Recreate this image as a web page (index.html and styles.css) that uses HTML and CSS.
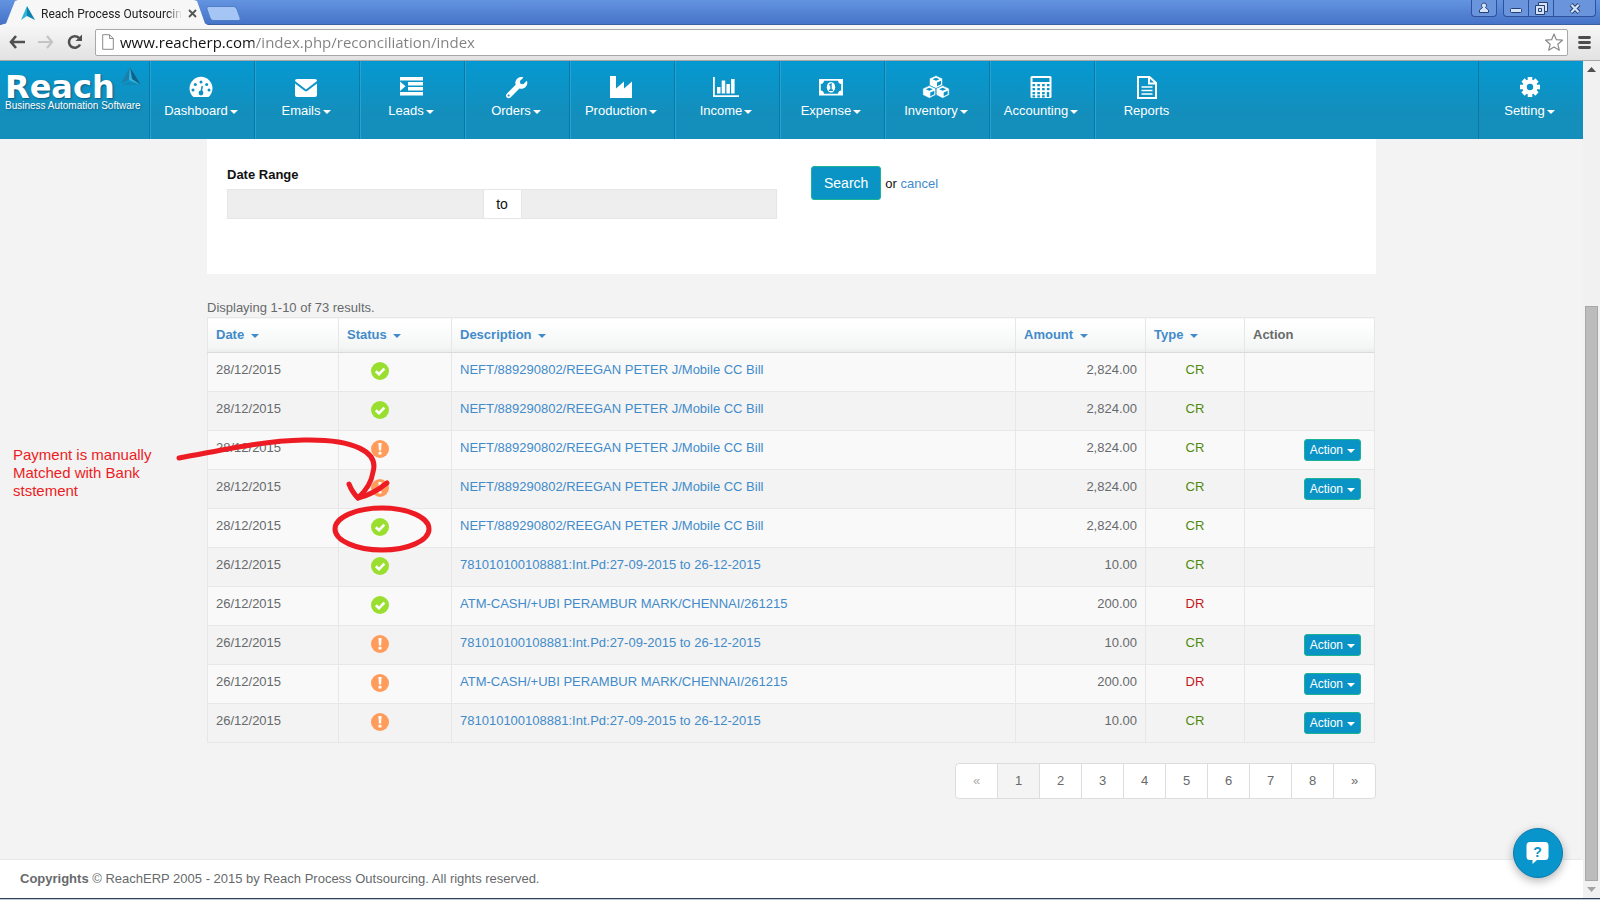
FILE: index.html
```
<!DOCTYPE html>
<html lang="en">
<head>
    <meta charset="UTF-8">
    <meta name="viewport" content="width=device-width, initial-scale=1.0">
    <title>Reach Process Outsourcing</title>
    <link rel="stylesheet" href="styles.css">
</head>
<body>
    <!-- shared icons -->
    <svg class="sprite" aria-hidden="true">
        <symbol id="ok" viewBox="0 0 18 18">
            <circle cx="9" cy="9" r="9" fill="#9adf2f"/>
            <path d="M4.8 9.2 8 12.2 13.4 6.6" fill="none" stroke="#fff" stroke-width="2.6"/>
        </symbol>
        <symbol id="warn" viewBox="0 0 18 18">
            <circle cx="9" cy="9" r="9" fill="#ff9c5b"/>
            <path d="M7.4 3h3.2l-.5 7.4H7.9z" fill="#fff"/>
            <rect x="7.5" y="11.8" width="3" height="2.8" rx=".6" fill="#fff"/>
        </symbol>
        <symbol id="arrowhead" viewBox="0 0 14 15">
            <path d="M6 0 0 14 6 10z" fill="#2cb4d8"/>
            <path d="M6 0 14 14 6 10z" fill="#0a83ad"/>
        </symbol>
    </svg>

    <header class="browser">
        <div class="tab-strip">
            <div class="tab">
                <svg class="tab-icon" width="14" height="15"><use href="#arrowhead"/></svg>
                <span class="tab-title">Reach Process Outsourcing</span>
                <button class="tab-close" aria-label="Close tab"><svg width="9" height="9" viewBox="0 0 9 9"><path d="M1 1l7 7M8 1 1 8" stroke="#555" stroke-width="1.8"/></svg></button>
            </div>
            <button class="new-tab" aria-label="New tab"></button>
            <div class="window-user">
                <button class="win-btn" aria-label="User"><svg width="12" height="12" viewBox="0 0 12 12"><path d="M3.5 3.5a2.5 2.5 0 1 1 4 2l3 2.500v2.500h-9V8l3-2.500a2.500 2.500 0 0 1-1-2z" fill="#d5e3fa" stroke="#26406f"/></svg></button>
            </div>
            <div class="window-controls">
                <button class="win-btn" aria-label="Minimize"><svg width="12" height="12" viewBox="0 0 12 12"><rect x=".5" y="6.500" width="11" height="4" rx="1" fill="#d5e3fa" stroke="#26406f"/></svg></button>
                <button class="win-btn" aria-label="Restore"><svg width="13" height="13" viewBox="0 0 13 13"><path d="M3.500.500h9v9h-3v3h-9v-9h3z" fill="#d5e3fa" stroke="#26406f"/><path d="M3.500 3.500h6v6M3.500 6.500h3v3h-3z" fill="none" stroke="#26406f"/></svg></button>
                <button class="win-btn win-close" aria-label="Close"><svg width="12" height="11" viewBox="0 0 12 11"><path d="M2 1.500 10 9.500M10 1.500 2 9.500" stroke="#26406f" stroke-width="4"/><path d="M2.300 1.800 9.700 9.200M9.700 1.800 2.300 9.200" stroke="#d5e3fa" stroke-width="2.200"/></svg></button>
            </div>
        </div>
        <div class="toolbar">
            <button class="tool-btn" aria-label="Back"><svg width="16" height="14" viewBox="0 0 16 14"><path d="M7 1 2 7l5 6M2 7h14" fill="none" stroke="#505050" stroke-width="2.600"/></svg></button>
            <button class="tool-btn" aria-label="Forward"><svg width="16" height="14" viewBox="0 0 16 14"><path d="M9 1l5 6-5 6M14 7H0" fill="none" stroke="#c4c4c4" stroke-width="2.200"/></svg></button>
            <button class="tool-btn" aria-label="Reload"><svg width="16" height="16" viewBox="0 0 16 16"><path d="M13 10.500A5.800 5.800 0 1 1 12 4" fill="none" stroke="#505050" stroke-width="2.600"/><path d="M15 .5v6.500H8.500z" fill="#505050"/></svg></button>
            <div class="address">
                <svg width="12" height="16" viewBox="0 0 12 16"><path d="M.7.700h6.800l3.800 3.800v10.800H.7zM7.500.700v3.800h3.800" fill="#fff" stroke="#8a8a8a"/></svg>
                <input class="address-input" type="text" aria-label="Address" value="www.reacherp.com/index.php/reconciliation/index">
                <svg width="18" height="18" viewBox="0 0 18 18"><path d="M9 1l2.400 5.700 6 .5-4.600 4 1.500 6L9 14l-5.300 3.200 1.500-6-4.600-4 6-.5z" fill="#fff" stroke="#8a8a8a" stroke-width="1.200" stroke-linejoin="round"/></svg>
            </div>
            <button class="tool-btn" aria-label="Menu"><svg width="13" height="13" viewBox="0 0 13 13"><path d="M1.500 1.500h10M1.500 6.500h10M1.500 11.500h10" stroke="#4d4d4d" stroke-width="2.800" stroke-linecap="round"/></svg></button>
        </div>
    </header>

    <div class="viewport">
        <div class="page">
            <nav class="navbar">
                <a class="brand" href="#">
                    <svg class="brand-mark" width="24" height="22" viewBox="0 0 24 22"><path d="M11 0 2 16l8-3z" fill="#1d7fa9"/><path d="M11 0 10 13l12 5z" fill="#35b5e0"/><path d="M11 0 22 18 13 12z" fill="#0f6288"/><path d="M10 15l-8 3h20z" fill="#1587b5"/></svg>
                    <span class="brand-name">Reach</span>
                    <span class="brand-tag">Business Automation Software</span>
                </a>
                <a class="nav-item" href="#">
                    <svg width="28" height="24" viewBox="0 0 28 24"><path d="M6.400 22A11.500 11.500 0 1 1 21.600 22z" fill="#fff"/><g fill="#0b93c5"><circle cx="6" cy="15" r="1.500"/><circle cx="8.300" cy="9.500" r="1.500"/><circle cx="14" cy="7" r="1.500"/><circle cx="19.700" cy="9.500" r="1.500"/><circle cx="22" cy="15" r="1.500"/><circle cx="14" cy="18" r="2.400"/></g><path d="M14 18l1.300-7" stroke="#0b93c5" stroke-width="1.500"/></svg>
                    <span class="caret">Dashboard</span>
                </a>
                <a class="nav-item" href="#">
                    <svg width="28" height="24" viewBox="0 0 28 24"><path d="M3 6q0-2 2-2h18q2 0 2 2L14 14.500zM3 8.500l9.500 7.300q1.500 1 3 0L25 8.500V20q0 2-2 2H5q-2 0-2-2z" fill="#fff"/></svg>
                    <span class="caret">Emails</span>
                </a>
                <a class="nav-item" href="#">
                    <svg width="28" height="24" viewBox="0 0 28 24"><path d="M3 2h23v3.500H3zM11 7h15v3.500H11zM11 12h15v3.500H11zM3 17h23v3.500H3zM3 6.500l5.500 4.700L3 16z" fill="#fff"/></svg>
                    <span class="caret">Leads</span>
                </a>
                <a class="nav-item" href="#">
                    <svg width="28" height="24" viewBox="-96 -45 672 576"><path fill="#fff" d="M507.730 109.100c-2.240-9.030-13.540-12.090-20.120-5.510l-74.360 74.360-67.880-11.310-11.310-67.880 74.360-74.360c6.620-6.620 3.430-17.900-5.660-20.160-47.380-11.740-99.550.910-136.580 37.930-39.640 39.640-50.550 97.100-34.050 147.200L18.740 402.760c-24.990 24.990-24.990 65.510 0 90.500 24.990 24.990 65.510 24.990 90.500 0l213.210-213.210c50.120 16.710 107.470 5.680 147.370-34.220 37.070-37.070 49.700-89.320 37.910-136.730zM64 472c-13.250 0-24-10.750-24-24 0-13.260 10.750-24 24-24s24 10.740 24 24c0 13.250-10.750 24-24 24z"/></svg>
                    <span class="caret">Orders</span>
                </a>
                <a class="nav-item" href="#">
                    <svg width="28" height="24" viewBox="0 0 28 24"><path d="M3 1h6v12.500l8-7v7l8-7V23H3z" fill="#fff"/></svg>
                    <span class="caret">Production</span>
                </a>
                <a class="nav-item" href="#">
                    <svg width="28" height="24" viewBox="0 0 28 24"><path d="M1 2h1.800v18.200H27V22H1zM5 12h3.500v6.500H5zM9.700 5.500h3.500v13H9.700zM14.400 9h3.500v9.500h-3.500zM19.100 4h3.500v14.500h-3.500z" fill="#fff"/></svg>
                    <span class="caret">Income</span>
                </a>
                <a class="nav-item" href="#">
                    <svg width="28" height="24" viewBox="0 0 28 24"><path fill-rule="evenodd" d="M2 4h24v16.500H2zM7 5.800A3.500 3.500 0 0 1 3.800 9v6.500A3.500 3.500 0 0 1 7 18.700h14a3.500 3.500 0 0 1 3.200-3.200V9A3.500 3.500 0 0 1 21 5.800z" fill="#fff"/><ellipse cx="14" cy="12.200" rx="4.200" ry="5.300" fill="#fff"/><path d="M12.300 10.200 14 9v6M12 15.300h4" fill="none" stroke="#0b93c5" stroke-width="1.400"/></svg>
                    <span class="caret">Expense</span>
                </a>
                <a class="nav-item" href="#">
                    <svg width="28" height="24" viewBox="0 0 28 24"><g fill="#fff" stroke="#0b93c5" stroke-width=".6"><path d="M14 .5l6.500 3v7L14 13.500l-6.500-3v-7z"/><path d="M7.300 10.500l6.500 3v6.500l-6.500 3.300-6.500-3.300v-6.500z"/><path d="M20.700 10.500l6.500 3v6.500l-6.500 3.300-6.500-3.300v-6.500z"/></g><path d="M10.500 4.200l3.500 1.600 3.500-1.600L14 2.700zM15 7.500v3.700l4-1.900V5.700zM3.800 14.200l3.500 1.600 3.500-1.600-3.500-1.500zM8.300 17.500v3.700l4-1.900v-3.600zM17.200 14.200l3.500 1.600 3.500-1.600-3.500-1.500zM21.700 17.500v3.700l4-1.900v-3.600z" fill="#0b93c5"/></svg>
                    <span class="caret">Inventory</span>
                </a>
                <a class="nav-item" href="#">
                    <svg width="28" height="24" viewBox="0 0 28 24"><rect x="3.500" y="1" width="21" height="22" rx="1.500" fill="#fff"/><path d="M5.500 3h17v4h-17z" fill="#0b93c5"/><path d="M5.500 10.200h17M5.500 14.200h17M5.500 18.200h12.500M5.500 21.300h12.500" stroke="#0b93c5" stroke-width="2.200" stroke-dasharray="2.600 2.200"/><path d="M21 17v5" stroke="#0b93c5" stroke-width="2.400"/></svg>
                    <span class="caret">Accounting</span>
                </a>
                <a class="nav-item nav-last" href="#">
                    <svg width="28" height="24" viewBox="0 0 28 24"><path d="M5 2h11.500l6.500 6v15H5zM16 2v6.500h7" fill="none" stroke="#fff" stroke-width="2"/><path d="M8.500 12h11M8.500 15.500h11M8.500 19h11" stroke="#fff" stroke-width="1.500"/></svg>
                    <span>Reports</span>
                </a>
                <a class="nav-item nav-setting" href="#">
                    <svg width="28" height="24" viewBox="0 0 28 24"><path d="M14 2v20M4 12h20M7 5l14 14M21 5 7 19" stroke="#fff" stroke-width="4.600"/><circle cx="14" cy="12" r="5.300" fill="none" stroke="#fff" stroke-width="4.500"/><circle cx="14" cy="12" r="3.200" fill="#0b93c5"/></svg>
                    <span class="caret">Setting</span>
                </a>
            </nav>

            <main class="container">
                <form class="search-panel">
                    <div class="form-group">
                        <label for="date-from">Date Range</label>
                        <div class="input-group">
                            <input type="text" id="date-from" readonly>
                            <label class="addon" for="date-to">to</label>
                            <input type="text" id="date-to" readonly>
                        </div>
                    </div>
                    <div class="form-actions">
                        <button class="btn btn-search" type="button">Search</button>
                        <span>or <a href="#">cancel</a></span>
                    </div>
                </form>

                <section class="results">
                    <div class="summary">Displaying 1-10 of 73 results.</div>
                    <table class="grid">
                        <colgroup>
                            <col class="col-date"><col class="col-status"><col><col class="col-amount"><col class="col-type"><col class="col-action">
                        </colgroup>
                        <thead>
                            <tr>
                                <th><a class="caret" href="#">Date </a></th>
                                <th><a class="caret" href="#">Status </a></th>
                                <th><a class="caret" href="#">Description </a></th>
                                <th><a class="caret" href="#">Amount </a></th>
                                <th><a class="caret" href="#">Type </a></th>
                                <th>Action</th>
                            </tr>
                        </thead>
                        <tbody>
                            <tr><td>28/12/2015</td><td class="status"><svg role="img" aria-label="Matched"><use href="#ok"/></svg></td><td><a href="#">NEFT/889290802/REEGAN PETER J/Mobile CC Bill</a></td><td class="amount">2,824.00</td><td class="type cr">CR</td><td></td></tr>
                            <tr><td>28/12/2015</td><td class="status"><svg role="img" aria-label="Matched"><use href="#ok"/></svg></td><td><a href="#">NEFT/889290802/REEGAN PETER J/Mobile CC Bill</a></td><td class="amount">2,824.00</td><td class="type cr">CR</td><td></td></tr>
                            <tr><td>28/12/2015</td><td class="status"><svg role="img" aria-label="Pending"><use href="#warn"/></svg></td><td><a href="#">NEFT/889290802/REEGAN PETER J/Mobile CC Bill</a></td><td class="amount">2,824.00</td><td class="type cr">CR</td><td class="action"><button class="btn btn-action caret">Action</button></td></tr>
                            <tr><td>28/12/2015</td><td class="status"><svg role="img" aria-label="Pending"><use href="#warn"/></svg></td><td><a href="#">NEFT/889290802/REEGAN PETER J/Mobile CC Bill</a></td><td class="amount">2,824.00</td><td class="type cr">CR</td><td class="action"><button class="btn btn-action caret">Action</button></td></tr>
                            <tr><td>28/12/2015</td><td class="status"><svg role="img" aria-label="Matched"><use href="#ok"/></svg></td><td><a href="#">NEFT/889290802/REEGAN PETER J/Mobile CC Bill</a></td><td class="amount">2,824.00</td><td class="type cr">CR</td><td></td></tr>
                            <tr><td>26/12/2015</td><td class="status"><svg role="img" aria-label="Matched"><use href="#ok"/></svg></td><td><a href="#">781010100108881:Int.Pd:27-09-2015 to 26-12-2015</a></td><td class="amount">10.00</td><td class="type cr">CR</td><td></td></tr>
                            <tr><td>26/12/2015</td><td class="status"><svg role="img" aria-label="Matched"><use href="#ok"/></svg></td><td><a href="#">ATM-CASH/+UBI PERAMBUR MARK/CHENNAI/261215</a></td><td class="amount">200.00</td><td class="type dr">DR</td><td></td></tr>
                            <tr><td>26/12/2015</td><td class="status"><svg role="img" aria-label="Pending"><use href="#warn"/></svg></td><td><a href="#">781010100108881:Int.Pd:27-09-2015 to 26-12-2015</a></td><td class="amount">10.00</td><td class="type cr">CR</td><td class="action"><button class="btn btn-action caret">Action</button></td></tr>
                            <tr><td>26/12/2015</td><td class="status"><svg role="img" aria-label="Pending"><use href="#warn"/></svg></td><td><a href="#">ATM-CASH/+UBI PERAMBUR MARK/CHENNAI/261215</a></td><td class="amount">200.00</td><td class="type dr">DR</td><td class="action"><button class="btn btn-action caret">Action</button></td></tr>
                            <tr><td>26/12/2015</td><td class="status"><svg role="img" aria-label="Pending"><use href="#warn"/></svg></td><td><a href="#">781010100108881:Int.Pd:27-09-2015 to 26-12-2015</a></td><td class="amount">10.00</td><td class="type cr">CR</td><td class="action"><button class="btn btn-action caret">Action</button></td></tr>
                        </tbody>
                    </table>

                    <!-- red note over the table -->
                    <p class="note">Payment is manually<br>Matched with Bank<br>ststement</p>
                    <svg class="note-arrow" width="260" height="120" viewBox="0 0 260 120" fill="none" stroke="#ed1c24" stroke-width="5" stroke-linecap="round">
                        <path d="M5 22C45 15 85 5 130 4c50-1 75 12 69 32q-2 14-15 26"/>
                        <path d="M175 48q3 8 9 14 14-3 29-15" stroke-linejoin="round"/>
                        <ellipse cx="208" cy="93" rx="47" ry="21"/>
                    </svg>
                </section>

                <ul class="pagination">
                    <li class="disabled"><a href="#">«</a></li>
                    <li class="active"><a href="#">1</a></li>
                    <li><a href="#">2</a></li>
                    <li><a href="#">3</a></li>
                    <li><a href="#">4</a></li>
                    <li><a href="#">5</a></li>
                    <li><a href="#">6</a></li>
                    <li><a href="#">7</a></li>
                    <li><a href="#">8</a></li>
                    <li><a href="#">»</a></li>
                </ul>
            </main>

            <footer class="footer"><strong>Copyrights</strong> © ReachERP 2005 - 2015 by Reach Process Outsourcing. All rights reserved.</footer>

            <button class="help" aria-label="Help">
                <svg width="24" height="24" viewBox="0 0 24 24"><path d="M4 1h15q3.500 0 3.500 3.500v11q0 3.500-3.500 3.500h-8l-4.500 4V19H4Q.5 19 .5 15.500v-11Q.5 1 4 1z" fill="#fff"/><text x="11.500" y="15.500" text-anchor="middle" class="help-mark">?</text></svg>
            </button>
        </div>

        <div class="scrollbar">
            <svg width="17" height="17" viewBox="0 0 17 17"><path d="M4 11l4.500-5 4.500 5z" fill="#505050"/></svg>
            <div class="thumb"></div>
            <svg width="17" height="17" viewBox="0 0 17 17"><path d="M4 6l4.500 5L13 6z" fill="#a3a3a3"/></svg>
        </div>
    </div>
    <div class="taskbar"></div>
</body>
</html>
```
FILE: styles.css
```
* {
    box-sizing: border-box;
}
body {
    margin: 0;
    height: 100vh;
    display: flex;
    flex-direction: column;
    overflow: hidden;
    font-family: "Liberation Sans", Arial, sans-serif;
    font-size: 13px;
    line-height: 18px;
    color: #676a6c;
    background: #f3f3f3;
}
a {
    color: #428bca;
    text-decoration: none;
}
button {
    font-family: inherit;
    border: 0;
    padding: 0;
    background: none;
}
svg {
    display: block;
    flex: none;
}
.sprite {
    position: absolute;
    width: 0;
    height: 0;
}
.caret::after {
    content: "";
    display: inline-block;
    margin-left: 2px;
    vertical-align: middle;
    border-top: 4px solid;
    border-left: 4px solid transparent;
    border-right: 4px solid transparent;
}

/* browser window */
.tab-strip {
    height: 25px;
    display: flex;
    background: linear-gradient(#6394e0, #4673c8);
    border-bottom: 1px solid #3c5f9f;
}
.tab {
    width: 208px;
    height: 25px;
    padding: 2px 10px 0 21px;
    display: flex;
    align-items: center;
    gap: 6px;
    background: #f7f7f7;
    clip-path: polygon(0 100%, 6px 94%, 15px 4%, 18px 0, 194px 0, 197px 4%, 205px 94%, 100% 100%);
}
.tab-title {
    width: 141px;
    white-space: nowrap;
    font-family: Roboto, sans-serif;
    font-size: 12px;
    color: #222;
    mask-image: linear-gradient(to right, #000 90%, transparent);
}
.new-tab {
    width: 31px;
    height: 15px;
    margin-top: 6px;
    background: #a5c6f5;
    border: 1px solid #4f7dc8;
    border-radius: 3px;
    transform: skewX(20deg);
}
.window-user,
.window-controls {
    display: flex;
    height: 17px;
    border: 1px solid #2f509b;
    border-top: 0;
    border-radius: 0 0 4px 4px;
    background: #6a95dd;
}
.window-user {
    margin-left: auto;
    margin-right: 6px;
}
.window-controls {
    margin-right: 4px;
}
.win-btn {
    width: 24px;
    display: flex;
    align-items: center;
    justify-content: center;
}
.win-btn + .win-btn {
    width: 25px;
    border-left: 1px solid #2f509b;
}
.win-btn + .win-close {
    width: 42px;
}
.toolbar {
    height: 36px;
    display: flex;
    align-items: center;
    gap: 13px;
    padding: 0 9px 1px;
    background: linear-gradient(#f7f7f7, #e2e2e2);
    border-bottom: 1px solid #a6a6a6;
}
.address {
    flex: 1;
    height: 27px;
    margin: 0 -3px 0 -1px;
    padding: 0 4px 0 6px;
    display: flex;
    align-items: center;
    gap: 6px;
    background: #fff;
    border: 1px solid #a8a8a8;
    border-radius: 2px;
}
.address-input {
    flex: 1;
    border: 0;
    padding: 0;
    outline: 0;
    font-family: "Open Sans", sans-serif;
    font-size: 15px;
    color: transparent;
    background: linear-gradient(to right, #111 134px, #808080 134px);
    background-clip: text;
    -webkit-background-clip: text;
}

/* page */
.viewport {
    flex: 1;
    min-height: 0;
    display: flex;
}
.page {
    position: relative;
    flex: 1;
    display: flex;
    flex-direction: column;
}
.navbar {
    height: 78px;
    display: flex;
    background: linear-gradient(#0599d1, #148ebb 70%);
}
.brand {
    position: relative;
    width: 150px;
    padding: 14px 0 0 5px;
    border-right: 1px solid #0a78a5;
    color: #fff;
    text-shadow: 1px 1px 2px #0a5a7d;
}
.brand-name {
    display: block;
    font-family: "DejaVu Sans", sans-serif;
    font-size: 32px;
    font-weight: bold;
    line-height: 24px;
}
.brand-tag {
    display: block;
    font-family: "Liberation Sans Narrow", "Liberation Sans", sans-serif;
    font-size: 10px;
    line-height: 14px;
    white-space: nowrap;
}
.brand-mark {
    position: absolute;
    top: 6px;
    right: 6px;
}
.nav-item {
    width: 105px;
    padding: 14px 3px 0 0;
    display: flex;
    flex-direction: column;
    align-items: center;
    gap: 3px;
    border-left: 1px solid #21a4d6;
    border-right: 1px solid #0a78a5;
    color: #fff;
}
.nav-last {
    border-right: 0;
}
.nav-setting {
    margin-left: auto;
    border-left-color: #0a78a5;
    border-right: 0;
}
.container {
    width: 1169px;
    max-width: 100%;
    margin: 0 auto;
    flex: 1;
}
.search-panel {
    height: 135px;
    padding: 27px 20px 0;
    display: flex;
    align-items: flex-start;
    gap: 34px;
    background: #fff;
    color: #111;
}
.form-group {
    flex: 0 1 550px;
}
.form-group > label {
    display: block;
    margin-bottom: 5px;
    font-weight: bold;
}
.input-group {
    display: flex;
    height: 30px;
}
.input-group input {
    flex: 1;
    min-width: 0;
    border: 1px solid #e5e6e7;
    background: #eee;
}
.addon {
    width: 37px;
    border: 1px solid #e5e6e7;
    border-width: 1px 0;
    text-align: center;
    font-size: 14px;
    line-height: 28px;
}
.form-actions {
    display: flex;
    align-items: baseline;
    gap: 4px;
}
.btn {
    color: #fff;
    background: #0a94c6;
    border: 1px solid #1ab394;
    border-radius: 3px;
}
.btn-search {
    height: 34px;
    padding: 0 12px;
    font-size: 14px;
}
.btn-action {
    height: 22px;
    padding: 0 5px;
    font-size: 12px;
}
.btn-action::after {
    margin-left: 4px;
}
.results {
    position: relative;
    padding: 25px 1px 0 0;
}
.grid {
    width: 100%;
    table-layout: fixed;
    border-collapse: collapse;
}
.col-date {
    width: 131px;
}
.col-amount,
.col-action {
    width: 130px;
}
.col-status {
    width: 113px;
}
.col-type {
    width: 99px;
}
.grid th,
.grid td {
    border: 1px solid #e7e7e7;
    padding: 8px;
    text-align: left;
    vertical-align: top;
}
.grid th {
    height: 35px;
    background: linear-gradient(#fff 10%, #f4f6f6 85%, #e9ecec);
    border-bottom-color: #d8dcdc;
}
.grid th .caret::after {
    margin-left: 3px;
}
.grid td {
    height: 39px;
}
.grid tbody tr:nth-child(odd) {
    background: #f9f9f9;
}
.grid .status {
    padding: 9px 0 0 32px;
}
.status svg {
    width: 18px;
    height: 18px;
}
.grid .amount {
    text-align: right;
}
.grid .type {
    text-align: center;
}
.cr {
    color: #4f8a10;
}
.dr {
    color: #c4161c;
}
.grid .action {
    padding: 8px 13px 0 0;
    text-align: right;
}
.note {
    position: absolute;
    left: -194px;
    top: 172px;
    margin: 0;
    font-size: 15px;
    color: #ed1c24;
}
.note-arrow {
    position: absolute;
    left: -33px;
    top: 162px;
}
.pagination {
    margin: 20px 0 0;
    padding: 0;
    display: flex;
    justify-content: flex-end;
    list-style: none;
}
.pagination a {
    display: block;
    width: 43px;
    height: 36px;
    margin-left: -1px;
    line-height: 34px;
    text-align: center;
    color: #676a6c;
    background: #fff;
    border: 1px solid #ddd;
}
.pagination .active a {
    background: #f4f4f4;
}
.pagination .disabled a {
    color: #aaa;
}
.pagination li:first-child a {
    border-radius: 4px 0 0 4px;
}
.pagination li:last-child a {
    border-radius: 0 4px 4px 0;
}
.footer {
    height: 39px;
    padding: 10px 20px;
    background: #fff;
    border-top: 1px solid #e7eaec;
}
.help {
    position: absolute;
    right: 20px;
    bottom: 20px;
    width: 50px;
    height: 50px;
    display: flex;
    align-items: center;
    justify-content: center;
    border-radius: 50%;
    background: #0795cb;
    border: 1px solid #0a7cb0;
    box-shadow: 0 3px 10px rgba(0,0,0,0.3);
}
.help-mark {
    font-size: 14px;
    font-weight: bold;
    fill: #0795cb;
}
.scrollbar {
    width: 17px;
    display: flex;
    flex-direction: column;
    background: #f1f1f1;
}
.thumb {
    flex: 0 0 575px;
    margin: auto 2px 0;
    background: #bcbcbc;
    border: 1px solid #a8a8a8;
}
.taskbar {
    height: 2px;
    background: #c3ccd6;
    border-top: 1px solid #2d4256;
}
```
